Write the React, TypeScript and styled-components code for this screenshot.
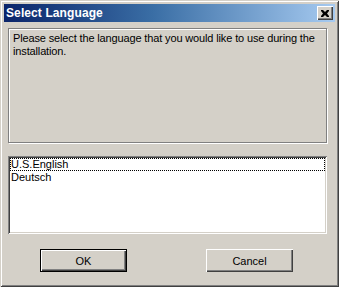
import React from 'react';
import styled, { createGlobalStyle } from 'styled-components';

const GlobalStyle = createGlobalStyle`
  html, body {
    margin: 0;
    padding: 0;
    background: #d4d0c8;
  }
  body {
    font-family: "Liberation Sans", Arial, sans-serif;
    font-size: 11px;
    color: #000;
  }
`;

const Window = styled.div`
  width: 339px;
  height: 287px;
  box-sizing: border-box;
  padding: 4px;
  background: #d4d0c8;
  display: flex;
  flex-direction: column;
  box-shadow:
    inset 1px 1px 0 #d4d0c8,
    inset -1px -1px 0 #404040,
    inset 2px 2px 0 #ffffff,
    inset -2px -2px 0 #808080;
`;

const TitleBar = styled.div`
  height: 18px;
  flex-shrink: 0;
  display: flex;
  align-items: center;
  justify-content: space-between;
  padding: 0 2px 0 2px;
  background: linear-gradient(to right, #0a246a 0%, #3a6ea5 45%, #a6caf0 100%);
`;

const Title = styled.span`
  color: #ffffff;
  font-weight: bold;
  font-size: 12px;
  letter-spacing: 0.1px;
`;

const CloseButton = styled.button`
  width: 16px;
  height: 14px;
  padding: 0;
  border: none;
  background: #d4d0c8;
  display: flex;
  align-items: center;
  justify-content: center;
  box-shadow:
    inset 1px 1px 0 #ffffff,
    inset -1px -1px 0 #404040,
    inset -2px -2px 0 #808080;
`;

const Client = styled.div`
  flex: 1;
  display: flex;
  flex-direction: column;
  padding: 6px 8px 0 4px;
`;

const MessagePanel = styled.div`
  height: 115px;
  box-sizing: border-box;
  border: 1px solid #808080;
  box-shadow: 1px 1px 0 #ffffff, inset 1px 1px 0 #ffffff;
  padding: 3px 0 0 4px;
  line-height: 13px;
  letter-spacing: -0.14px;
`;

const ListBox = styled.div`
  margin-top: 13px;
  height: 78px;
  box-sizing: border-box;
  background: #ffffff;
  padding: 2px;
  box-shadow:
    inset 1px 1px 0 #808080,
    inset -1px -1px 0 #ffffff,
    inset 2px 2px 0 #404040,
    inset -2px -2px 0 #d4d0c8;
`;

const ListItem = styled.div<{ $focused?: boolean }>`
  height: 13px;
  line-height: 13px;
  padding-left: 1px;
  box-sizing: border-box;
  color: #000;
  outline: ${p => (p.$focused ? '1px dotted #000' : 'none')};
  outline-offset: -1px;
  white-space: nowrap;
`;

const ButtonRow = styled.div`
  margin-top: 15px;
  display: flex;
  padding-left: 32px;
  gap: 79px;
`;

const Button = styled.button<{ $default?: boolean }>`
  width: 87px;
  height: 23px;
  padding: 0;
  border: none;
  background: #d4d0c8;
  font-family: "Liberation Sans", Arial, sans-serif;
  font-size: 11px;
  color: #000;
  box-shadow: ${p =>
    p.$default
      ? 'inset 0 0 0 1px #000000, inset 2px 2px 0 #ffffff, inset -2px -2px 0 #404040, inset -3px -3px 0 #808080'
      : 'inset 1px 1px 0 #ffffff, inset -1px -1px 0 #404040, inset -2px -2px 0 #808080'};
`;

const languages = ['U.S.English', 'Deutsch'];

export default function App() {
  return (
    <>
      <GlobalStyle />
      <Window>
        <TitleBar>
          <Title>Select Language</Title>
          <CloseButton aria-label="Close">
            <svg width="8" height="7" viewBox="0 0 8 7">
              <path d="M0 0h2l2 2 2-2h2v1L6 3.5 8 6v1H6L4 5 2 7H0V6l2-2.5L0 1z" fill="#000" />
            </svg>
          </CloseButton>
        </TitleBar>
        <Client>
          <MessagePanel>
            Please select the language that you would like to use during the installation.
          </MessagePanel>
          <ListBox>
            {languages.map((lang, i) => (
              <ListItem key={lang} $focused={i === 0}>
                {lang}
              </ListItem>
            ))}
          </ListBox>
          <ButtonRow>
            <Button $default>OK</Button>
            <Button>Cancel</Button>
          </ButtonRow>
        </Client>
      </Window>
    </>
  );
}
